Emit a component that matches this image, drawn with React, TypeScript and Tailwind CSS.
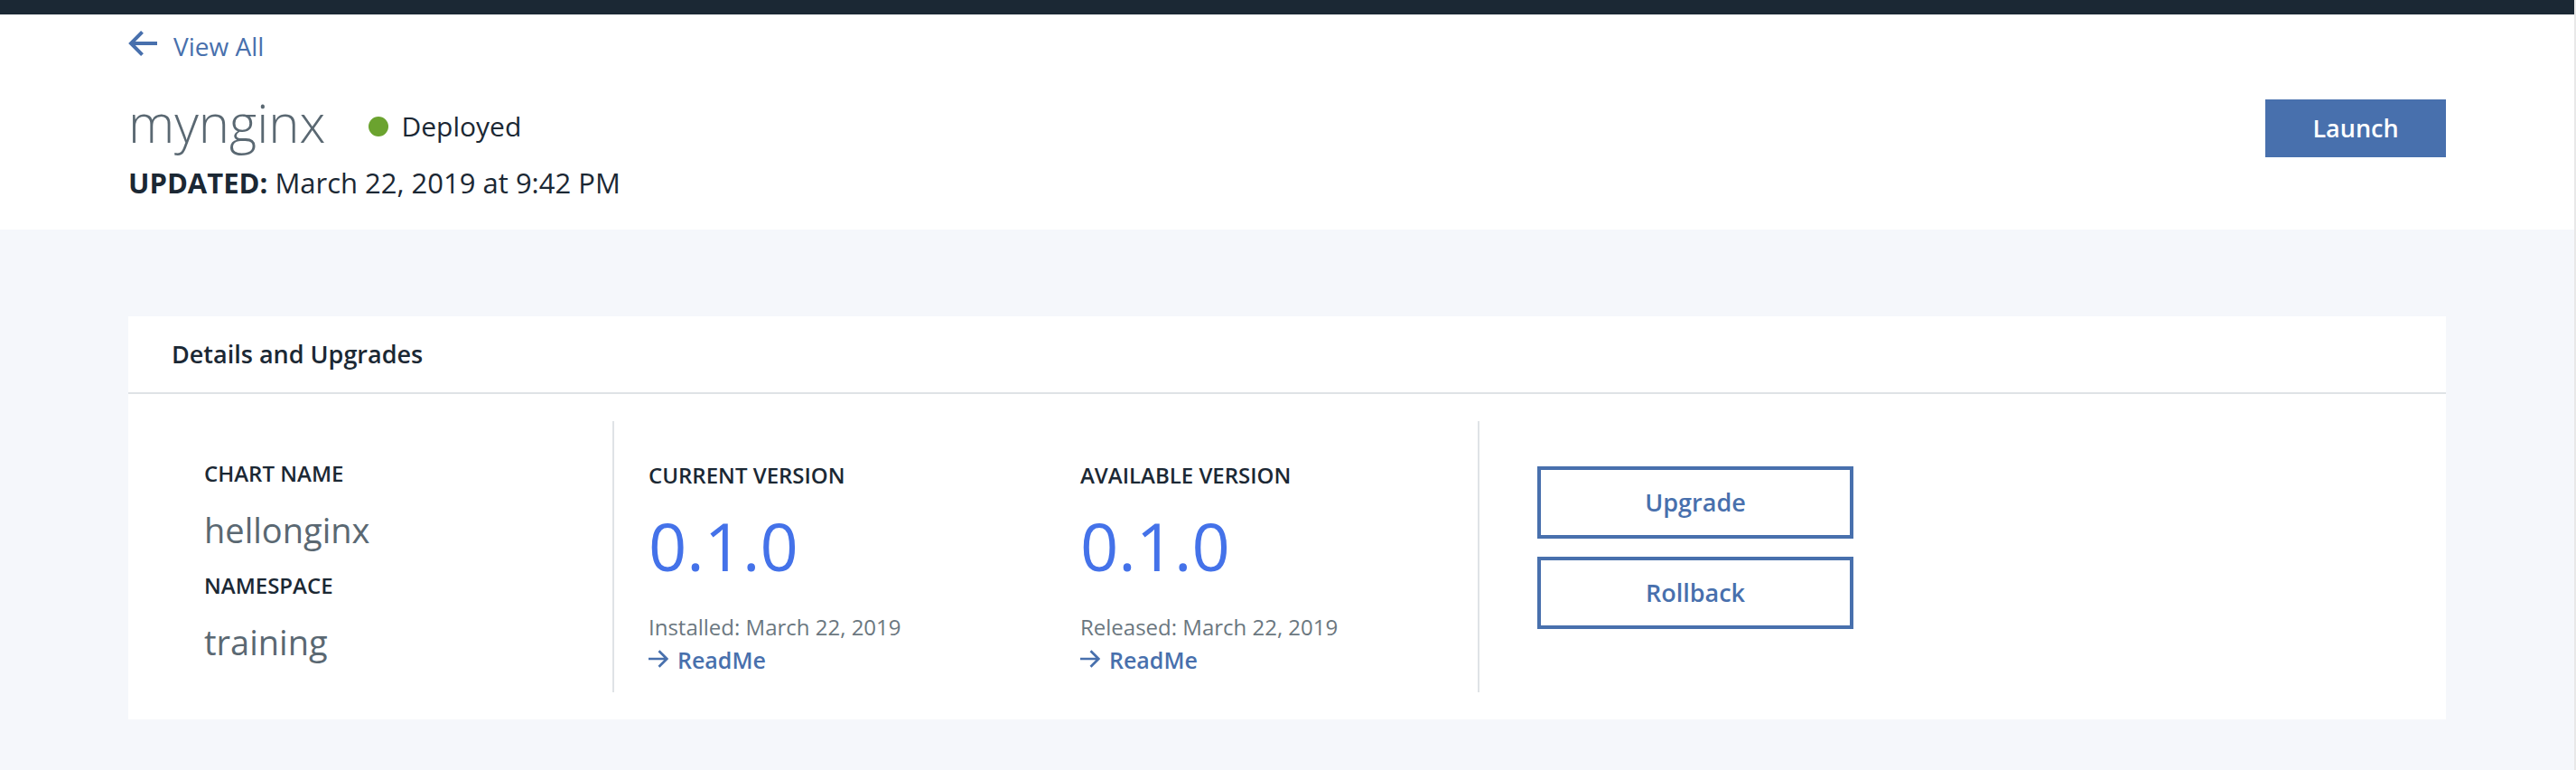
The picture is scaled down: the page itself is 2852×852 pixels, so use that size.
import React from 'react';

function BackArrow() {
  return (
    <svg aria-hidden="true" className="shrink-0 self-start" width="32" height="34" viewBox="0 0 32 34" fill="none" stroke="currentColor" strokeWidth="4">
      <path d="M2.5 17H32M15.5 4.4L3 17L15.5 29.6" />
    </svg>
  );
}

function ForwardArrow() {
  return (
    <svg aria-hidden="true" className="shrink-0 self-start" width="22" height="34" viewBox="0 0 22 34" fill="none" stroke="currentColor" strokeWidth="2.7">
      <path d="M0 17H20.5M11.5 8.2L20.3 17L11.5 25.8" />
    </svg>
  );
}

function Field({ label, value }: { label: string; value: string }) {
  return (
    <div>
      <dt className="text-2xl leading-8 font-semibold uppercase">{label}</dt>
      <dd className="mt-[18px] text-[38px] leading-14 text-[#5a6872]">{value}</dd>
    </div>
  );
}

function Version({ title, version, note }: { title: string; version: string; note: string }) {
  return (
    <section className="pl-[38px]">
      <h3 className="text-2xl leading-8 font-semibold uppercase">{title}</h3>
      <p className="mt-[18px] text-[74px] leading-[88px] text-[#4472e9]">{version}</p>
      <p className="mt-7 text-2xl leading-9 text-[#6b7780]">{note}</p>
      <a href="#readme" className="inline-flex items-center gap-[10px] text-[25px] leading-9 font-semibold text-[#4870ad]">
        <ForwardArrow />
        ReadMe
      </a>
    </section>
  );
}

const outlineButton =
  'h-20 w-[350px] border-4 border-[#4870ad] bg-white text-[27px] font-semibold text-[#4870ad]';

export default function App() {
  return (
    <div className="min-h-screen border-r-2 border-[#e8e8e8] bg-[#f5f7fb] font-['Open_Sans','Noto_Sans',sans-serif] text-[#1b2834]">
      <div className="h-4 bg-[#1b2834]" />
      <header className="bg-white px-[142px] pt-[15px] pb-7">
        <a href="#all" className="inline-flex items-center gap-[18px] align-top text-[28px] leading-10 text-[#4870ad]">
          <BackArrow />
          View All
        </a>
        <div className="mt-[27px] flex items-end justify-between">
          <div className="flex items-end">
            <h1 className="text-[58px] leading-[76px] font-light text-[#5a6872]">mynginx</h1>
            <p className="ml-12 flex items-center gap-[14px] text-[30px] leading-[68px]">
              <span className="size-[22px] rounded-full bg-[#6ba32f]" />
              Deployed
            </p>
          </div>
          <button type="button" className="h-16 w-[200px] bg-[#4870ad] text-[27px] font-semibold text-white">
            Launch
          </button>
        </div>
        <p className="mt-1 text-[31px] leading-[48px]">
          <strong className="font-bold">UPDATED:</strong> March 22, 2019 at 9:42 PM
        </p>
      </header>
      <main className="px-[142px] pt-24 pb-14">
        <section className="bg-white">
          <h2 className="border-b-2 border-[#dfe3e6] px-12 text-[27px] leading-[84px] font-semibold">
            Details and Upgrades
          </h2>
          <div className="grid grid-cols-[538fr_958fr_1070fr] py-[30px]">
            <dl className="flex min-h-[300px] flex-col gap-[18px] border-r-2 border-[#dfe3e6] pt-[42px] pl-[84px]">
              <Field label="Chart name" value="hellonginx" />
              <Field label="Namespace" value="training" />
            </dl>
            <div className="grid grid-cols-2 border-r-2 border-[#dfe3e6] pt-11">
              <Version title="Current version" version="0.1.0" note="Installed: March 22, 2019" />
              <Version title="Available version" version="0.1.0" note="Released: March 22, 2019" />
            </div>
            <div className="flex flex-col items-start gap-5 pt-[50px] pl-16">
              <button type="button" className={outlineButton}>Upgrade</button>
              <button type="button" className={outlineButton}>Rollback</button>
            </div>
          </div>
        </section>
      </main>
    </div>
  );
}
